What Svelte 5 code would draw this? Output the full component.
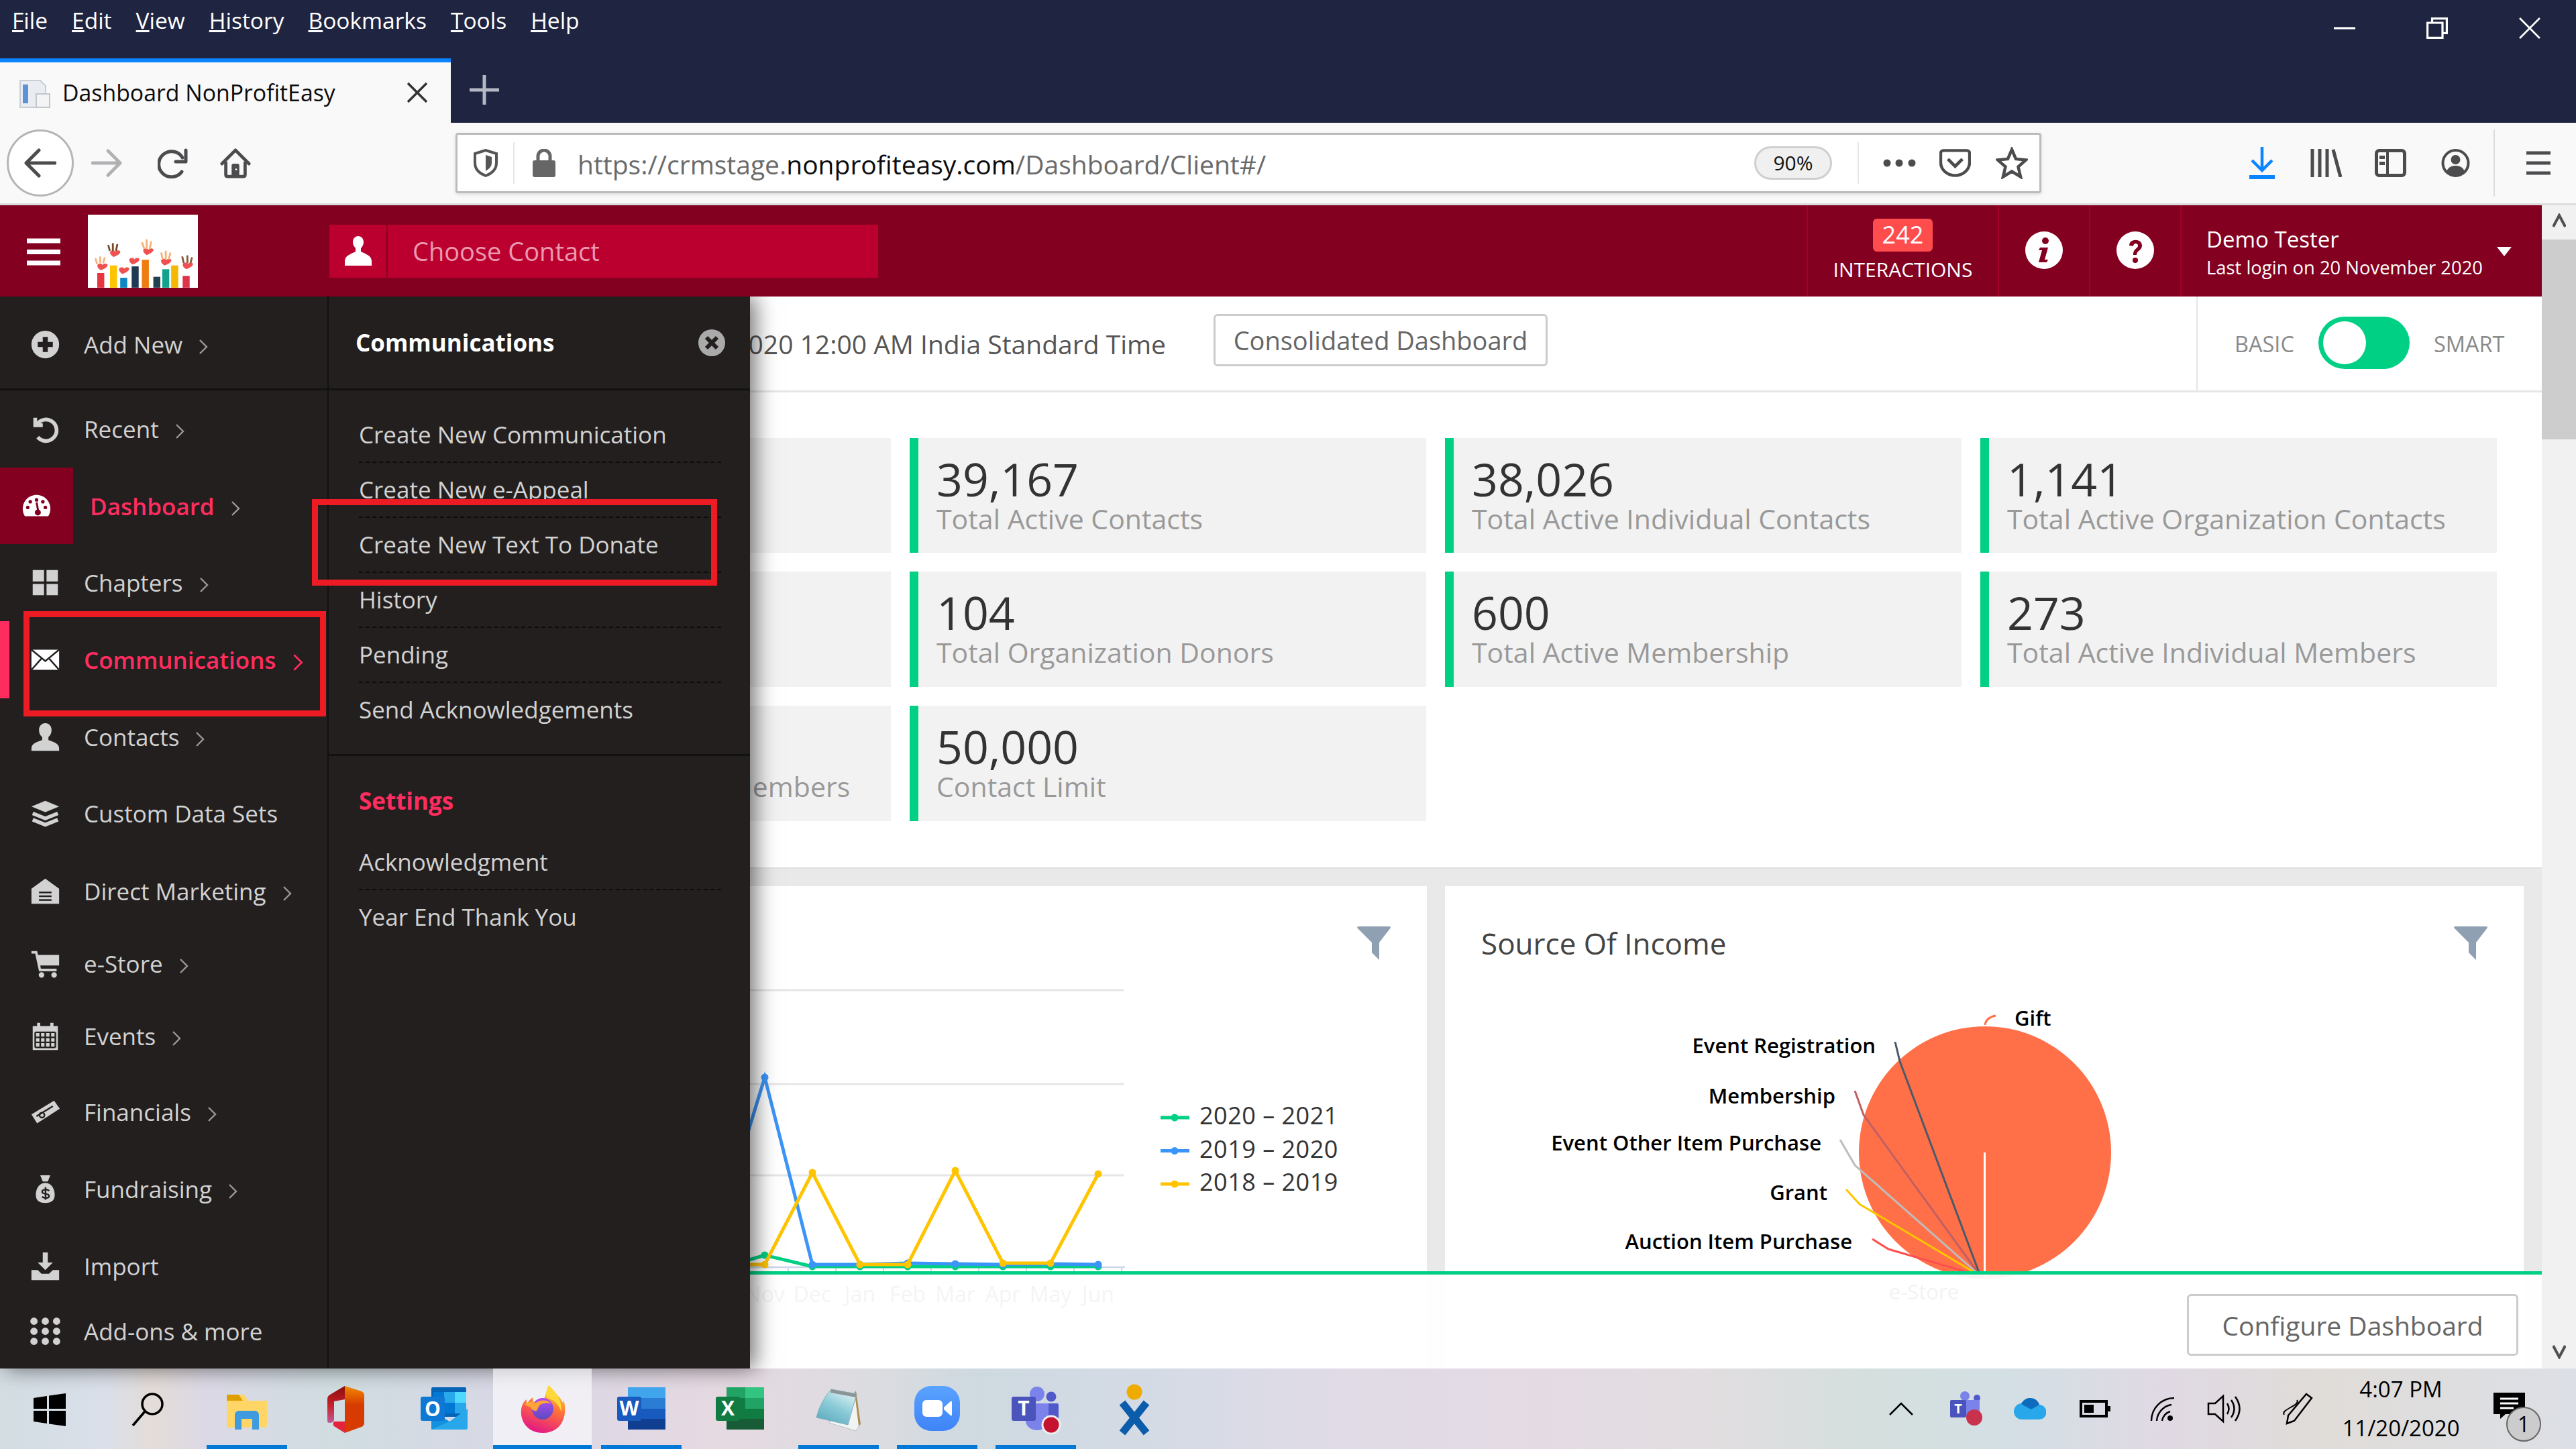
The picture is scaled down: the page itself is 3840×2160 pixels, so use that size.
<script>
  const menu = ['File', 'Edit', 'View', 'History', 'Bookmarks', 'Tools', 'Help'];

  // row heights vary a little in the real sidebar, so they live with the data
  const nav = [
    { label: 'Recent', icon: 'recent', h: 115, more: true },
    { label: 'Dashboard', icon: 'gauge', h: 114, more: true, kind: 'current' },
    { label: 'Chapters', icon: 'grid', h: 115, more: true },
    { label: 'Communications', icon: 'mail', h: 115, more: true, kind: 'open' },
    { label: 'Contacts', icon: 'user', h: 114, more: true },
    { label: 'Custom Data Sets', icon: 'stack', h: 115 },
    { label: 'Direct Marketing', icon: 'warehouse', h: 116, more: true },
    { label: 'e-Store', icon: 'cart', h: 100, more: true },
    { label: 'Events', icon: 'calendar', h: 116, more: true },
    { label: 'Financials', icon: 'money', h: 110, more: true },
    { label: 'Fundraising', icon: 'bag', h: 120, more: true },
    { label: 'Import', icon: 'import', h: 110 },
    { label: 'Add-ons & more', icon: 'dots', h: 84 }
  ];

  const dot = (x, y, r) => `M${x - r} ${y}a${r} ${r} 0 1 0 ${r * 2} 0a${r} ${r} 0 1 0 ${-r * 2} 0z`;
  const nine = [4, 12, 20].flatMap((y) => [3, 12, 21].map((x) => dot(x, y, 2.9))).join('');

  const fills = {
    plus: 'M12 1a11 11 0 1 0 0 22 11 11 0 0 0 0-22zM10 6h4v4h4v4h-4v4h-4v-4H6v-4h4z',
    gauge: 'M12 3C5.9 3 1 8 1 14c0 2.2.6 4.2 1.7 6h18.6c1.1-1.8 1.7-3.8 1.7-6 0-6-4.9-11-11-11z',
    grid: 'M2 2h9v9H2zM13 2h9v9h-9zM2 13h9v9H2zM13 13h9v9h-9z',
    mail: 'M1 4h22v16H1z',
    user: 'M12 1c-3 0-5 2.4-5 5.5 0 2.4 1 4.5 2.5 5.6v2.4c-3 1.2-8.500 2.300-8.500 6.500v2h22v-2c0-4.200-5.500-5.300-8.500-6.500v-2.400C16 11 17 8.900 17 6.500 17 3.400 15 1 12 1z',
    stack: 'M12 2l11 4.500L12 11 1 6.500z',
    warehouse: 'M12 2l11 8v12H1V10z',
    cart: 'M1 2h4.500l.7 3H23v8.500H8l.5 2.500H21v2H7L4 4H1z' + dot(9, 21, 2.2) + dot(19, 21, 2.2),
    calendar: 'M2 4h3.500V1.500h2.500V4h8V1.500h2.500V4H22v19H2z',
    money: 'M1 14L19 3l4.500 6.500L5.500 21z',
    bag: 'M8 1h8l-2 5h-4zM12 7c5 0 7.500 5 7.500 9.500S17 23 12 23s-7.500-2-7.500-6.500S7 7 12 7z',
    import: 'M10 1h4v8h4l-6 6-6-6h4zM1 15h5l3 3h6l3-3h5v8H1z',
    dots: nine
  };
  const lines = {
    recent: ['M4 3v6h6', 'M5 9a8.500 8.500 0 1 1 1 9.500'],
    stack: ['M2 12l10 4 10-4', 'M2 17l10 4 10-4']
  };
  const cuts = {
    mail: ['M1 4l11 9 11-9', 'M1 20l8-9', 'M23 20l-8-9'],
    warehouse: ['M7 13h10', 'M7 16h10', 'M7 19h10'],
    calendar: ['M4 9h16M4 13h16M4 17h16M4 21h16M4 9v12M8 9v12M12 9v12M16 9v12M20 9v12'],
    money: ['M5 15.500l13-8', 'M8 16a2 2 0 1 0-.1-.1'],
    bag: ['M15 13.500c-1-1.500-5.500-1.500-5.500.7s5.500 1 5.500 3.200-4.500 2-5.500.5', 'M12.200 10.500v10']
  };

  const subMenu = ['Create New Communication', 'Create New e-Appeal', 'Create New Text To Donate', 'History', 'Pending', 'Send Acknowledgements'];
  const settings = ['Acknowledgment', 'Year End Thank You'];

  const stats = [
    { hidden: true },
    { value: '39,167', label: 'Total Active Contacts' },
    { value: '38,026', label: 'Total Active Individual Contacts' },
    { value: '1,141', label: 'Total Active Organization Contacts' },
    { hidden: true },
    { value: '104', label: 'Total Organization Donors' },
    { value: '600', label: 'Total Active Membership' },
    { value: '273', label: 'Total Active Individual Members' },
    { value: '', label: 'Total Active Organization Members' },
    { value: '50,000', label: 'Contact Limit' }
  ];

  // chart data is in page pixels: the svg's viewBox starts where the panel starts
  const months = ['Nov', 'Dec', 'Jan', 'Feb', 'Mar', 'Apr', 'May', 'Jun'];
  const xs = [1140, 1211, 1282, 1353, 1424, 1495, 1566, 1637];
  const series = [
    { name: '2020 – 2021', color: '#00d084', lead: 1878, ys: [1869, 1886, 1886, 1886, 1886, 1886, 1886, 1886] },
    { name: '2019 – 2020', color: '#3b94f7', lead: 1702, ys: [1604, 1883, 1883, 1881, 1882, 1883, 1882, 1883] },
    { name: '2018 – 2019', color: '#ffc400', lead: 1883, ys: [1883, 1746, 1883, 1883, 1743, 1881, 1881, 1748] }
  ];
  const pts = (s) => `1110,${s.lead} ` + s.ys.map((y, i) => `${xs[i]},${y}`).join(' ');

  const slices = [
    { label: 'Event Registration', x: 2796, y: 1558, c: '#4a5a6a', from: [2825, 1551], via: [2832, 1580] },
    { label: 'Membership', x: 2736, y: 1633, c: '#c25f62', from: [2765, 1624], via: [2778, 1660] },
    { label: 'Event Other Item Purchase', x: 2715, y: 1703, c: '#bdbdbd', from: [2743, 1697], via: [2765, 1735] },
    { label: 'Grant', x: 2724, y: 1777, c: '#ffc400', from: [2752, 1771], via: [2772, 1793] },
    { label: 'Auction Item Purchase', x: 2761, y: 1850, c: '#ff5050', from: [2791, 1845], via: [2815, 1860] }
  ];

  const dock = [
    { id: 'win' }, { id: 'search' }, { id: 'folder', on: true }, { id: 'office' }, { id: 'outlook' },
    { id: 'firefox', on: true, active: true }, { id: 'word', on: true }, { id: 'excel' },
    { id: 'notepad', on: true }, { id: 'zoom', on: true }, { id: 'teams', on: true }, { id: 'xero' }
  ];
</script>

{#snippet ico(name)}
  <svg class="nav-ico" viewBox="0 0 24 24" aria-hidden="true">
    {#if fills[name]}<path d={fills[name]} fill="currentColor" fill-rule="evenodd" />{/if}
    {#each lines[name] ?? [] as d}<path {d} fill="none" stroke="currentColor" stroke-width="3" />{/each}
    {#each cuts[name] ?? [] as d}<path {d} fill="none" stroke="#231f1e" stroke-width="1.300" />{/each}
    {#if name === 'gauge'}
      <path d={dot(7, 8.500, 1.400) + dot(12, 7, 1.400) + dot(17, 8.500, 1.400) + dot(5, 13, 1.400) + dot(19, 13, 1.400) + dot(13, 17, 2.400)} fill="#830020" />
      <path d="M12 9l1.500 8" stroke="#830020" stroke-width="1.500" />
    {/if}
  </svg>
{/snippet}

{#snippet chevron()}
  <svg class="chev" viewBox="0 0 14 24" aria-hidden="true"><path d="M2 2l10 10L2 22" fill="none" stroke="currentColor" stroke-width="2.400" /></svg>
{/snippet}

{#snippet funnel()}
  <svg class="funnel" viewBox="0 0 50 50" aria-hidden="true"><path d="M0 2q0-2 2-2h46q2 0 2 2L33 24v26l-11-11V24z" fill="#8fa0b3" /></svg>
{/snippet}

<div class="page">
  <div class="titlebar">
    <div class="menurow">
      <nav class="menubar">
        {#each menu as m}<span><u>{m[0]}</u>{m.slice(1)}</span>{/each}
      </nav>
      <div class="winctl">
        <svg viewBox="0 0 30 30"><path d="M0 15h30" stroke="#fff" stroke-width="3" /></svg>
        <svg viewBox="0 0 30 30"><path d="M8 6V1.500h20.500V22H24M1.500 7.500h21v21h-21z" fill="none" stroke="#fff" stroke-width="3" /></svg>
        <svg viewBox="0 0 30 30"><path d="M1 1l28 28M29 1L1 29" stroke="#fff" stroke-width="2.500" /></svg>
      </div>
    </div>
    <div class="tabrow">
      <div class="tab">
        <svg class="favicon" viewBox="0 0 48 48">
          <path d="M2 6h30l8 8v32H2z" fill="#e9edf2" stroke="#c9ced6" stroke-width="2" />
          <rect x="6" y="12" width="8" height="28" fill="#5b93d6" />
          <rect x="26" y="26" width="20" height="20" fill="#f4f4f4" stroke="#c2c6cc" stroke-width="2" />
        </svg>
        <span class="tabtitle">Dashboard NonProfitEasy</span>
        <svg class="tabclose" viewBox="0 0 30 30"><path d="M1 1l28 28M29 1L1 29" stroke="#333" stroke-width="3.500" /></svg>
      </div>
      <svg class="newtab" viewBox="0 0 44 44"><path d="M22 0v44M0 22h44" stroke="#b4b8c4" stroke-width="5" /></svg>
    </div>
  </div>

  <div class="toolbar">
    <div class="backbtn">
      <svg viewBox="0 0 48 46" width="48" height="46"><path d="M46 23H4M22 4L3 23l19 19" fill="none" stroke="#4c4c4f" stroke-width="5" stroke-linecap="round" stroke-linejoin="round" /></svg>
    </div>
    <svg class="tb fwd" viewBox="0 0 48 46"><path d="M2 23h42M26 4l19 19-19 19" fill="none" stroke="#b1b1b3" stroke-width="5" stroke-linecap="round" stroke-linejoin="round" /></svg>
    <svg class="tb reload" viewBox="0 0 46 46"><path d="M37 15A19 19 0 1 0 36 36" fill="none" stroke="#4c4c4f" stroke-width="5" stroke-linecap="round" /><path d="M42 4v17H27" fill="none" stroke="#4c4c4f" stroke-width="5" stroke-linecap="round" stroke-linejoin="round" /></svg>
    <svg class="tb home" viewBox="0 0 48 48"><path d="M3 25L24 4l21 21" fill="none" stroke="#4c4c4f" stroke-width="5" stroke-linecap="round" stroke-linejoin="round" /><path d="M9 22v20q0 3 3 3h24q3 0 3-3V22" fill="none" stroke="#4c4c4f" stroke-width="5" /><path d="M18 45V28q0-3 3-3h6q3 0 3 3v17z" fill="#4c4c4f" /><circle cx="25" cy="34" r="1.500" fill="#f9f9fa" /></svg>

    <div class="urlbar">
      <svg class="shield" viewBox="0 0 36 42"><path d="M18 2L2 7v14c0 10 8 16 16 19 8-3 16-9 16-19V7z" fill="none" stroke="#555" stroke-width="4" /><path d="M18 9v24c5-3 9-7 9-12V12z" fill="#555" /></svg>
      <i class="urldiv"></i>
      <svg class="lock" viewBox="0 0 36 42"><path d="M9 18v-7a9 9 0 0 1 18 0v7" fill="none" stroke="#666" stroke-width="5" /><rect x="1" y="17" width="34" height="25" rx="3" fill="#666" /></svg>
      <span class="url">https://crmstage.<b>nonprofiteasy.com</b>/Dashboard/Client#/</span>
      <span class="zoompill">90%</span>
      <i class="urldiv second"></i>
      <svg class="dots3" viewBox="0 0 49 12"><circle cx="6" cy="6" r="5.500" fill="#4c4c4f" /><circle cx="24" cy="6" r="5.500" fill="#4c4c4f" /><circle cx="43" cy="6" r="5.500" fill="#4c4c4f" /></svg>
      <svg class="pocket" viewBox="0 0 48 42"><path d="M2 6a4 4 0 0 1 4-4h36a4 4 0 0 1 4 4v14a22 20 0 0 1-44 0z" fill="none" stroke="#4c4c4f" stroke-width="4.500" /><path d="M13 15l11 11 11-11" fill="none" stroke="#4c4c4f" stroke-width="5" /></svg>
      <svg class="star" viewBox="0 0 48 48"><path d="M24 4l6 14 15 1.500-11.500 10 3.500 15L24 36.500 11 44.500l3.500-15L3 19.500 18 18z" fill="none" stroke="#4c4c4f" stroke-width="4.500" /></svg>
    </div>

    <div class="tools">
      <svg class="dl" viewBox="0 0 38 48"><path d="M19 0v34M4 20l15 15 15-15" fill="none" stroke="#0a84ff" stroke-width="4.500" /><rect x="0" y="42" width="38" height="6" fill="#0a84ff" /></svg>
      <svg class="lib" viewBox="0 0 48 42"><path d="M3 0v42M14 0v42M25 0v42M34 1l11 41" fill="none" stroke="#4c4c4f" stroke-width="5" /></svg>
      <svg class="side" viewBox="0 0 47 42"><rect x="2.500" y="2.500" width="42" height="37" rx="4" fill="none" stroke="#4c4c4f" stroke-width="5" /><path d="M19 2v38" stroke="#4c4c4f" stroke-width="4" /><path d="M7 10h8v5H7zM7 19h8v5H7z" fill="#4c4c4f" /></svg>
      <svg class="acct" viewBox="0 0 43 42"><circle cx="21.500" cy="21" r="19" fill="none" stroke="#4c4c4f" stroke-width="4" /><circle cx="21.500" cy="16" r="7" fill="#4c4c4f" /><path d="M8 34c2-7 8-9 13.500-9S33 27 35 34a19 19 0 0 1-27 0z" fill="#4c4c4f" /></svg>
      <i class="tooldiv"></i>
      <svg class="burger" viewBox="0 0 36 36"><path d="M0 3h36M0 18h36M0 33h36" stroke="#4c4c4f" stroke-width="5" /></svg>
    </div>
  </div>

  <div class="app">
    <div class="appcol">
      <header class="apphead">
        <svg class="hamb" viewBox="0 0 50 41"><path d="M0 4h50M0 20.500h50M0 37h50" stroke="#fff" stroke-width="7" /></svg>
        <svg class="logo" viewBox="0 0 164 109">
          <rect width="164" height="109" fill="#fff" />
          <g transform="translate(4 32) scale(.95 .705)">
            <g stroke-width="11">
              <path d="M16 109V78" stroke="#e8343f" />
              <path d="M36 109V62" stroke="#ffc400" />
              <path d="M52 109V88" stroke="#0f87c4" />
              <path d="M70 109V64" stroke="#1f3a52" />
              <path d="M86 109V50" stroke="#ef7c10" />
              <path d="M104 109V86" stroke="#23404f" />
              <path d="M118 109V70" stroke="#12a38c" />
              <path d="M132 109V62" stroke="#f5b800" />
              <path d="M150 109V84" stroke="#e0334c" />
            </g>
            <g fill="#f05050">
              <path d="M16 72c-8-7-6-14-1-14 3 0 4 3 4 3s1-3 4-3c5 0 7 7-7 14z" />
              <path d="M50 80c-8-7-6-14-1-14 3 0 4 3 4 3s1-3 4-3c5 0 7 7-7 14z" />
              <path d="M36 44c-8-7-6-14-1-14 3 0 4 3 4 3s1-3 4-3c5 0 7 7-7 14z" />
              <path d="M66 60c-8-7-6-14-1-14 3 0 4 3 4 3s1-3 4-3c5 0 7 7-7 14z" />
              <path d="M88 40c-8-7-6-14-1-14 3 0 4 3 4 3s1-3 4-3c5 0 7 7-7 14z" />
              <path d="M116 62c-8-7-6-14-1-14 3 0 4 3 4 3s1-3 4-3c5 0 7 7-7 14z" />
              <path d="M150 70c-8-7-6-14-1-14 3 0 4 3 4 3s1-3 4-3c5 0 7 7-7 14z" />
            </g>
            <g stroke-width="3" stroke-linecap="round">
              <path d="M30 30l-2-10M35 30V16M40 30l2-12" stroke="#7a4a2a" />
              <path d="M84 26l-3-12M88 26V8M93 26l2-14" stroke="#f6b27a" />
              <path d="M10 58l-2-10M15 56V44M20 56l2-10" stroke="#f6b27a" />
              <path d="M113 48l-2-12M118 48V32M123 48l2-12" stroke="#f6b27a" />
              <path d="M146 56l-2-12M152 56V42M157 56l2-10" stroke="#8a5a3a" />
            </g>
          </g>
        </svg>
        <div class="contact">
          <span class="contact-ico">
            <svg viewBox="0 0 50 44" width="50" height="44"><path d="M25 0c-5 0-8 4-8 9 0 4 2 7 4 9v5c-6 3-16 6-16 14v7h40v-7c0-8-10-11-16-14v-5c2-2 4-5 4-9 0-5-3-9-8-9z" fill="#fff" /></svg>
          </span>
          <span class="contact-txt">Choose Contact</span>
        </div>
        <div class="headright">
          <div class="hcell interactions">
            <span class="badge">242</span>
            <span class="ilabel">INTERACTIONS</span>
          </div>
          <div class="hcell round">
            <span class="hcircle"><svg viewBox="0 0 56 56"><circle cx="28" cy="28" r="28" fill="#fff" /><circle cx="30" cy="14" r="5" fill="#830020" /><path d="M22 24h12l-5 18h5l-2 4H20l5-18h-5z" fill="#830020" /></svg></span>
          </div>
          <div class="hcell round">
            <span class="hcircle"><svg viewBox="0 0 56 56"><circle cx="28" cy="28" r="28" fill="#fff" /><path d="M19 21c0-11 19-11 19 0 0 8-8 7-8 14h-5c0-10 7-9 7-14 0-4-7-4-7 1z" fill="#830020" /><circle cx="28" cy="43" r="4" fill="#830020" /></svg></span>
          </div>
          <div class="user">
            <div class="uname">Demo Tester</div>
            <div class="ulogin">Last login on 20 November 2020</div>
            <svg class="caret" viewBox="0 0 22 14"><path d="M0 0h22L11 14z" fill="#fff" /></svg>
          </div>
        </div>
      </header>

      <main class="content">
        <div class="topline">
          <span class="stamp">Data as of 11/20/2020 12:00 AM India Standard Time</span>
          <button class="ghost consolidated">Consolidated Dashboard</button>
          <div class="mode">
            <span>BASIC</span>
            <span class="toggle"><i></i></span>
            <span>SMART</span>
          </div>
        </div>

        <div class="stats">
          {#each stats as s}
            <div class="stat">
              {#if !s.hidden}
                <div class="num">{s.value}</div>
                <div class="lbl">{s.label}</div>
              {/if}
            </div>
          {/each}
        </div>

        <div class="panels">
          <section class="panel chartpanel">
            <div class="phead end">{@render funnel()}</div>
            <svg class="canvas" viewBox="558 1319 1569 721" width="1569" height="721">
              {#each [1474, 1614, 1750] as y}<line x1="1118" x2="1675" y1={y} y2={y} stroke="#e6e6e6" stroke-width="3" />{/each}
              <line x1="1118" x2="1677" y1="1887" y2="1887" stroke="#ccd6eb" stroke-width="2.500" />
              {#each xs as x}<line x1={x + 35} x2={x + 35} y1="1887" y2="1910" stroke="#ccd6eb" stroke-width="2" />{/each}
              {#each months as m, i}<text x={xs[i]} y="1939" text-anchor="middle" class="tick">{m}</text>{/each}
              {#each series as s}
                <polyline points={pts(s)} fill="none" stroke={s.color} stroke-width="5" />
                {#each s.ys as y, i}<circle cx={xs[i]} cy={y} r="5.500" fill={s.color} />{/each}
              {/each}
              {#each series as s, i}
                <line x1="1730" x2="1773" y1={1664 + i * 49.500} y2={1664 + i * 49.500} stroke={s.color} stroke-width="5" />
                <circle cx="1751" cy={1664 + i * 49.500} r="5.500" fill={s.color} />
                <text x="1788" y={1674 + i * 49.500} class="legend">{s.name}</text>
              {/each}
            </svg>
          </section>

          <section class="panel">
            <div class="phead">
              <h2>Source Of Income</h2>
              {@render funnel()}
            </div>
            <svg class="canvas" viewBox="2154 1319 1608 721" width="1608" height="721">
              <circle cx="2959" cy="1716" r="188" fill="#ff7049" />
              <line x1="2958.500" x2="2958.500" y1="1716" y2="1900" stroke="#fff" stroke-width="3" />
              <path d="M2959 1526q1-11 16-14" fill="none" stroke="#ff7049" stroke-width="3" />
              <text x="3003" y="1527" class="plabel">Gift</text>
              {#each slices as s}
                <polyline points="{s.from[0]},{s.from[1]} {s.via[0]},{s.via[1]} 2952,1900" fill="none" stroke={s.c} stroke-width="3" />
                <text x={s.x} y={s.y + 10} text-anchor="end" class="plabel">{s.label}</text>
              {/each}
              <text x="2920" y="1935" text-anchor="end" class="plabel faint">e-Store</text>
            </svg>
          </section>
        </div>
      </main>

      <div class="pagefoot">
        <button class="ghost configure">Configure Dashboard</button>
      </div>

      <aside class="drawer">
        <div class="col-main">
          <div class="addnew">
            {@render ico('plus')}
            <span>Add New</span>
            {@render chevron()}
          </div>
          {#each nav as n}
            <div class="navrow {n.kind ?? ''}" style:height="{n.h}px">
              {#if n.kind === 'current'}
                <span class="curblock">{@render ico(n.icon)}</span>
              {:else}
                {@render ico(n.icon)}
              {/if}
              <span class="navtxt">{n.label}</span>
              {#if n.more}{@render chevron()}{/if}
            </div>
          {/each}
        </div>
        <div class="col-sub">
          <div class="subhead">
            <span>Communications</span>
            <svg class="subclose" viewBox="0 0 40 40"><circle cx="20" cy="20" r="20" fill="#aaa" /><path d="M12 12l16 16M28 12L12 28" stroke="#231f1e" stroke-width="6" /></svg>
          </div>
          <ul class="sublist">
            {#each subMenu as s}<li>{s}</li>{/each}
          </ul>
          <div class="settings">
            <div class="settitle">Settings</div>
            <ul class="sublist tight">
              {#each settings as s}<li>{s}</li>{/each}
            </ul>
          </div>
        </div>
        <i class="mark mark-nav"></i>
        <i class="mark mark-sub"></i>
      </aside>
    </div>

    <div class="scrollbar">
      <svg viewBox="0 0 20 22" width="20" height="22"><path d="M1 20L10 3l9 17" fill="none" stroke="#505050" stroke-width="4" /></svg>
      <i class="thumb"></i>
      <svg class="sdown" viewBox="0 0 20 22" width="20" height="22"><path d="M1 2l9 17 9-17" fill="none" stroke="#505050" stroke-width="4" /></svg>
    </div>
  </div>

  <footer class="taskbar">
    <div class="dock">
      {#each dock as d}
        <div class="slot" class:active={d.active} class:on={d.on}>
          <svg viewBox="0 0 72 72" width="72" height="72">
            {#if d.id === 'win'}
              <path d="M12 19l20-3v19H12zM35 15.500L60 12v23H35zM12 38h20v19l-20-3zM35 38h25v23l-25-3.500z" fill="#000" />
            {:else if d.id === 'search'}
              <circle cx="42" cy="28" r="15" fill="none" stroke="#000" stroke-width="3.500" /><path d="M31 39L13 60" stroke="#000" stroke-width="3.500" />
            {:else if d.id === 'folder'}
              <path d="M6 14h26l6 9h28v36a4 4 0 0 1-4 4H10a4 4 0 0 1-4-4z" fill="#ffd566" /><path d="M6 14h18l6 9H6z" fill="#e09f00" /><path d="M18 66V44a6 6 0 0 1 6-6h24a6 6 0 0 1 6 6v22h-10V50H28v16z" fill="#3f9be0" />
            {:else if d.id === 'office'}
              <defs>
                <linearGradient id="off-r" x1="0" y1="0" x2="0" y2="1"><stop offset="0" stop-color="#f08a00" /><stop offset=".4" stop-color="#d83b01" /></linearGradient>
                <linearGradient id="off-l" x1="0" y1="0" x2="0" y2="1"><stop offset="0" stop-color="#8a0c0c" /><stop offset=".55" stop-color="#c8242c" /><stop offset="1" stop-color="#c05a9c" /></linearGradient>
              </defs>
              <path d="M35 1L60 9q4 2 4 6v41q0 4-4 6L35 71z" fill="url(#off-r)" />
              <path d="M35 1L13 14q-4 2-4 7v32q0 3 3 3 6 0 7-4V24l16-3z" fill="url(#off-l)" />
              <path d="M19 54h16v17l-16-10q-3-3 0-7z" fill="#e3243a" />
            {:else if d.id === 'outlook'}
              <rect x="17" y="3" width="52" height="44" rx="2" fill="#0364b8" />
              <rect x="20" y="10" width="16" height="16" fill="#0078d4" /><rect x="36" y="10" width="16" height="16" fill="#28a8ea" /><rect x="52" y="10" width="17" height="16" fill="#50d9ff" />
              <rect x="20" y="26" width="16" height="16" fill="#0364b8" /><rect x="36" y="26" width="16" height="16" fill="#0078d4" /><rect x="52" y="26" width="17" height="16" fill="#28a8ea" />
              <path d="M17 38l27 16 27-19v29q0 2-2 2H19q-2 0-2-2z" fill="#28a8ea" />
              <path d="M17 38l27 16-27 12z" fill="#1490df" />
              <rect x="1" y="17" width="36" height="36" rx="3" fill="#0f78d4" /><text x="19" y="46" text-anchor="middle" class="tile">O</text>
            {:else if d.id === 'firefox'}
              <defs>
                <linearGradient id="ff-a" x1=".7" y1="0" x2=".35" y2="1"><stop offset="0" stop-color="#ffe226" /><stop offset=".45" stop-color="#ff7139" /><stop offset="1" stop-color="#e31587" /></linearGradient>
                <linearGradient id="ff-b" x1=".5" y1="0" x2=".5" y2="1"><stop offset="0" stop-color="#b44cf5" /><stop offset="1" stop-color="#5a4bc0" /></linearGradient>
              </defs>
              <path d="M45 0c1 8 15 12 21 26 1-2 1-4 1-4 6 16 2 49-31 49C14 71 2 54 4 36c1-7 4-12 8-15-.5 3 0 5 1 7 2-5 5-8 9-10-1 3-1 5 0 7 5-1 11 0 14 2z" fill="url(#ff-a)" />
              <path d="M45 0c8 7 20 20 19 40-4-12-12-19-22-21-2-8 0-14 3-19z" fill="#ffd83a" />
              <circle cx="36" cy="35" r="16" fill="url(#ff-b)" />
              <path d="M8 28q10-6 18-2 6-5 16-3l7 4q-12-2-18 3l-4 8q-6 1-9-5-6-2-10-5z" fill="#ffa436" />
            {:else if d.id === 'word'}
              <rect x="16" y="3" width="56" height="63" rx="2" fill="#185abd" /><rect x="16" y="3" width="56" height="16" fill="#41a5ee" /><rect x="16" y="19" width="56" height="16" fill="#2b7cd3" /><rect x="16" y="50" width="56" height="16" fill="#103f91" /><rect x="0" y="17" width="36" height="36" rx="3" fill="#185abd" /><text x="18" y="45" text-anchor="middle" class="tile">W</text>
            {:else if d.id === 'excel'}
              <rect x="16" y="3" width="56" height="63" rx="2" fill="#107c41" /><rect x="44" y="3" width="28" height="16" fill="#33c481" /><rect x="16" y="3" width="28" height="16" fill="#21a366" /><rect x="44" y="19" width="28" height="16" fill="#21a366" /><rect x="16" y="50" width="56" height="16" fill="#185c37" /><rect x="0" y="17" width="36" height="36" rx="3" fill="#107c41" /><text x="18" y="45" text-anchor="middle" class="tile">X</text>
            {:else if d.id === 'notepad'}
              <defs><linearGradient id="np" x1=".8" y1="0" x2=".2" y2="1"><stop offset="0" stop-color="#e4f4f6" /><stop offset=".5" stop-color="#8ccbd8" /><stop offset="1" stop-color="#5aa9bd" /></linearGradient></defs>
              <path d="M60 10l8 48-6 10-40-12z" fill="#f2f4f4" stroke="#b8c2c6" stroke-width="1" />
              <path d="M62 8l7 50-3 3-6-50z" fill="#ab8f54" />
              <path d="M25 6l38 7-13 46L3 48q5-22 22-42z" fill="url(#np)" stroke="#7fb2bf" stroke-width="1" />
              <path d="M25 6l38 7-1 5-38-7z" fill="#8c9498" />
            {:else if d.id === 'zoom'}
              <defs><linearGradient id="zm" x1="0" y1="0" x2="0" y2="1"><stop offset="0" stop-color="#5aa2ff" /><stop offset="1" stop-color="#3f84f8" /></linearGradient></defs>
              <rect x="2" y="1" width="68" height="67" rx="25" fill="url(#zm)" /><rect x="14" y="22" width="30" height="25" rx="6" fill="#fff" /><path d="M46 33l10-9q2-1 2 1v19q0 2-2 1l-10-9z" fill="#fff" />
            {:else if d.id === 'teams'}
              <circle cx="38" cy="13" r="11" fill="#7b83eb" /><circle cx="59" cy="17" r="7.500" fill="#5059c9" />
              <rect x="45" y="27" width="25" height="29" rx="2" fill="#5059c9" />
              <path d="M21 27h34v26a17 14 0 0 1-34 0z" fill="#7b83eb" />
              <rect x="0" y="17" width="36" height="36" rx="3" fill="#4b53bc" /><text x="18" y="45" text-anchor="middle" class="tile">T</text>
              <circle cx="59" cy="59" r="13" fill="#c4122f" stroke="#eee" stroke-width="3" />
            {:else if d.id === 'xero'}
              <circle cx="36" cy="10" r="11.500" fill="#f0ab00" /><path d="M18 26l36 45M54 26L18 71" stroke="#0b5cab" stroke-width="11" />
            {/if}
          </svg>
        </div>
      {/each}
    </div>
    <div class="tray">
      <svg class="t-chev" viewBox="0 0 36 20"><path d="M1 19L18 2l17 17" fill="none" stroke="#000" stroke-width="2.500" /></svg>
      <svg class="t-teams" viewBox="0 0 50 54"><circle cx="24" cy="8" r="7" fill="#7b83eb" /><circle cx="42" cy="11" r="5" fill="#5059c9" /><rect x="16" y="14" width="30" height="24" fill="#7b83eb" /><rect x="2" y="14" width="24" height="26" rx="2" fill="#4b53bc" /><text x="14" y="34" text-anchor="middle" class="tile small">T</text><circle cx="38" cy="40" r="12" fill="#c9324c" /></svg>
      <svg class="t-drive" viewBox="0 0 48 32"><path d="M13 32a12 12 0 0 1-2-24C14 3 19 0 24 0c7 0 12 4 14 10a11 11 0 0 1-1 22z" fill="#28a8ea" /><path d="M11 9C14 3 19 0 24 0c7 0 12 4 14 10l-12 7z" fill="#0f6cbd" /></svg>
      <svg class="t-batt" viewBox="0 0 46 26"><rect x="2" y="2" width="38" height="22" fill="none" stroke="#000" stroke-width="4" /><rect x="7" y="7" width="14" height="12" fill="#000" /><rect x="41" y="9" width="5" height="8" fill="#000" /></svg>
      <svg class="t-wifi" viewBox="0 0 36 36"><g fill="none" stroke="#000" stroke-width="2.400"><path d="M2 36A34 34 0 0 1 36 2" /><path d="M10 36a26 26 0 0 1 22-24" /><path d="M18 36a18 18 0 0 1 12-14" /></g><circle cx="30" cy="32" r="4" /></svg>
      <svg class="t-vol" viewBox="0 0 50 44"><path d="M2 14h10L24 3v38L12 30H2z" fill="none" stroke="#000" stroke-width="2.500" /><path d="M30 14q5 8 0 16M36 9q9 13 0 26M42 4q13 18 0 36" fill="none" stroke="#000" stroke-width="2.500" /></svg>
      <svg class="t-pen" viewBox="0 0 50 50"><path d="M38 3l8 6-26 34-11 4 2-12z" fill="none" stroke="#000" stroke-width="2.500" /><path d="M5 34C-1 26 30 20 24 12" fill="none" stroke="#000" stroke-width="2" /></svg>
      <div class="clock">
        <span>4:07 PM</span>
        <span>11/20/2020</span>
      </div>
      <div class="notif">
        <svg viewBox="0 0 47 39" width="47" height="39"><path d="M0 0h47v32H18l-8 7v-7H0z" fill="#000" /><path d="M10 9h27M10 16h27M10 23h20" stroke="#fff" stroke-width="3" /></svg>
        <span class="ncount">1</span>
      </div>
    </div>
  </footer>
</div>

<style>
  :global(body) {
    margin: 0;
  }

  .page {
    width: 3840px;
    height: 2160px;
    display: flex;
    flex-direction: column;
    overflow: hidden;
    font-family: 'Open Sans', 'Noto Sans', sans-serif;
    background: #fff;
  }

  .titlebar {
    height: 183px;
    flex: none;
    background: #1f2440;
    display: flex;
    flex-direction: column;
  }

  .menurow {
    height: 84px;
    display: flex;
    justify-content: space-between;
  }

  .menubar {
    display: flex;
    gap: 36px;
    padding: 7px 0 0 18px;
    color: #fff;
    font-size: 33.500px;
    line-height: 46px;
  }

  .winctl {
    display: flex;
    gap: 106px;
    padding: 26px 53px 0 0;
  }

  .winctl svg {
    width: 32px;
    height: 32px;
  }

  .tabrow {
    height: 99px;
    display: flex;
    align-items: flex-start;
  }

  .tab {
    width: 672px;
    height: 96px;
    margin-top: 3px;
    box-sizing: border-box;
    background: #f9f9fa;
    border-top: 6px solid #0a84ff;
    display: flex;
    align-items: center;
    padding-left: 28px;
  }

  .favicon {
    width: 48px;
    height: 48px;
    flex: none;
  }

  .tabtitle {
    margin-left: 17px;
    font-size: 33.800px;
    color: #0c0c0d;
    width: 514px;
  }

  .tabclose {
    width: 30px;
    height: 40px;
    flex: none;
  }

  .newtab {
    width: 44px;
    height: 44px;
    margin: 28px 0 0 28px;
  }

  .toolbar {
    height: 120px;
    flex: none;
    box-sizing: content-box;
    background: #f9f9fa;
    border-bottom: 3px solid #dcdcdc;
    display: flex;
    align-items: center;
    position: relative;
  }

  .backbtn {
    width: 100px;
    height: 100px;
    margin-left: 10px;
    box-sizing: border-box;
    border: 3px solid #b5b5b5;
    border-radius: 50%;
    background: #fff;
    display: flex;
    align-items: center;
    justify-content: center;
    flex: none;
  }

  .tb {
    width: 46px;
    height: 46px;
    flex: none;
  }

  .fwd {
    margin-left: 26px;
  }

  .reload {
    margin-left: 53px;
  }

  .home {
    margin-left: 47px;
  }

  .urlbar {
    width: 2364px;
    height: 90px;
    margin-left: 305px;
    box-sizing: border-box;
    background: #fff;
    border: 3px solid #bcbcbc;
    border-radius: 4px;
    box-shadow: 0 2px 5px rgba(0, 0, 0, 0.12);
    display: flex;
    align-items: center;
    flex: none;
  }

  .shield {
    width: 36px;
    height: 42px;
    margin-left: 24px;
    flex: none;
  }

  .urldiv {
    width: 2px;
    height: 62px;
    background: #e6e6e6;
    margin-left: 23px;
    flex: none;
  }

  .lock {
    width: 36px;
    height: 42px;
    margin-left: 26px;
    flex: none;
  }

  .url {
    margin-left: 32px;
    margin-top: 3px;
    width: 1754px;
    font-size: 39px;
    color: #6a6a6a;
    white-space: nowrap;
  }

  .url b {
    color: #0c0c0d;
    font-weight: 400;
  }

  .zoompill {
    width: 116px;
    height: 50px;
    box-sizing: border-box;
    border: 3px solid #cfcfcf;
    border-radius: 25px;
    background: #f0f0f0;
    font-size: 30px;
    line-height: 44px;
    text-align: center;
    color: #111;
    flex: none;
  }

  .urldiv.second {
    margin-left: 38px;
  }

  .dots3 {
    width: 49px;
    height: 12px;
    margin-left: 36px;
    flex: none;
  }

  .pocket {
    width: 47px;
    height: 42px;
    margin-left: 35px;
    flex: none;
  }

  .star {
    width: 48px;
    height: 48px;
    margin-left: 37px;
    flex: none;
  }

  .tools {
    display: flex;
    align-items: center;
    margin-left: 310px;
  }

  .dl {
    width: 38px;
    height: 48px;
  }

  .lib {
    width: 48px;
    height: 42px;
    margin-left: 53px;
  }

  .side {
    width: 47px;
    height: 42px;
    margin-left: 48px;
  }

  .acct {
    width: 43px;
    height: 42px;
    margin-left: 52px;
  }

  .tooldiv {
    width: 2px;
    height: 100px;
    background: #dcdcdc;
    margin-left: 35px;
  }

  .burger {
    width: 36px;
    height: 36px;
    margin-left: 47px;
  }

  .app {
    flex: 1;
    min-height: 0;
    display: flex;
  }

  .appcol {
    flex: 1;
    min-width: 0;
    display: flex;
    flex-direction: column;
    position: relative;
  }

  .scrollbar {
    width: 51px;
    flex: none;
    background: #f1f1f1;
    display: flex;
    flex-direction: column;
    align-items: center;
    padding-top: 12px;
    box-sizing: border-box;
  }

  .thumb {
    align-self: stretch;
    height: 298px;
    margin-top: 17px;
    background: #cdcdcd;
  }

  .sdown {
    margin-top: auto;
    margin-bottom: 14px;
  }

  .apphead {
    height: 136px;
    flex: none;
    background: #830020;
    display: flex;
    align-items: center;
    position: relative;
    z-index: 3;
  }

  .hamb {
    width: 50px;
    height: 41px;
    margin: 3px 0 0 40px;
    flex: none;
  }

  .logo {
    width: 164px;
    height: 109px;
    margin-left: 41px;
    flex: none;
  }

  .contact {
    width: 818px;
    height: 79px;
    margin-left: 196px;
    background: #bb0030;
    display: flex;
    flex: none;
  }

  .contact-ico {
    width: 85px;
    border-right: 2px solid #830020;
    display: flex;
    align-items: center;
    justify-content: center;
    flex: none;
  }

  .contact-txt {
    margin-left: 37px;
    font-size: 38px;
    line-height: 79px;
    color: #ea9aae;
  }

  .headright {
    margin-left: auto;
    display: flex;
    align-self: stretch;
  }

  .hcell {
    border-left: 2px solid #a30028;
    box-sizing: border-box;
  }

  .interactions {
    width: 285px;
    display: flex;
    flex-direction: column;
    align-items: center;
    padding-top: 20px;
  }

  .badge {
    width: 89px;
    height: 49px;
    border-radius: 6px;
    background: #ff4d4d;
    color: #fff;
    font-size: 36px;
    line-height: 48px;
    text-align: center;
  }

  .ilabel {
    margin-top: 6px;
    font-size: 30px;
    line-height: 42px;
    color: #fff;
  }

  .round {
    width: 136px;
    display: flex;
    align-items: center;
    justify-content: center;
  }

  .hcircle {
    width: 56px;
    height: 56px;
    margin-top: -3px;
  }

  .user {
    width: 539px;
    box-sizing: border-box;
    border-left: 2px solid #a30028;
    padding: 31px 0 0 37px;
    color: #fff;
    position: relative;
  }

  .uname {
    font-size: 33px;
    line-height: 40px;
  }

  .ulogin {
    margin-top: 3px;
    font-size: 27.400px;
    line-height: 38px;
  }

  .caret {
    width: 22px;
    height: 14px;
    position: absolute;
    top: 62px;
    left: 470px;
  }

  .content {
    flex: 1;
    min-height: 0;
    display: flex;
    flex-direction: column;
  }

  .topline {
    height: 140px;
    flex: none;
    border-bottom: 3px solid #e6e6e6;
    display: flex;
    align-items: center;
  }

  .stamp {
    width: 1738px;
    flex: none;
    text-align: right;
    white-space: nowrap;
    font-size: 39px;
    color: #555;
  }

  .ghost {
    font-family: inherit;
    color: #666;
    background: #fff;
    border: 3px solid #ccc;
    border-radius: 6px;
    font-size: 38px;
    padding: 0;
  }

  .consolidated {
    width: 498px;
    height: 78px;
    margin: -11px 0 0 71px;
  }

  .mode {
    margin-left: auto;
    width: 515px;
    height: 100%;
    box-sizing: border-box;
    border-left: 2px solid #e6e6e6;
    display: flex;
    align-items: center;
    padding-left: 55px;
    font-size: 32.500px;
    color: #8a8a8a;
    gap: 36px;
  }

  .toggle {
    width: 136px;
    height: 78px;
    border-radius: 39px;
    background: #00d084;
    display: flex;
    align-items: center;
    padding-left: 7px;
    box-sizing: border-box;
    margin-top: -2px;
  }

  .toggle i {
    width: 64px;
    height: 64px;
    border-radius: 50%;
    background: #fff;
  }

  .stats {
    flex: none;
    display: grid;
    grid-template-columns: repeat(4, 770px);
    grid-template-rows: 171px 172px 172px;
    column-gap: 28px;
    row-gap: 28px;
    padding: 68px 0 69px 558px;
  }

  .stat {
    background: #f2f2f2;
    border-left: 13px solid #00d084;
    padding: 25px 0 0 27px;
  }

  .num {
    font-size: 68px;
    line-height: 72px;
    height: 72px;
    color: #333;
  }

  .lbl {
    font-size: 41px;
    line-height: 47px;
    color: #999;
    white-space: nowrap;
  }

  .panels {
    flex: 1;
    min-height: 0;
    background: #e9e9e9;
    border-top: 2px solid #e0e0e0;
    display: flex;
    gap: 27px;
    padding: 26px 27px 0 558px;
  }

  .panel {
    flex: 1;
    background: #fff;
    position: relative;
  }

  .chartpanel {
    flex: none;
    width: 1569px;
  }

  .phead {
    height: 170px;
    box-sizing: border-box;
    padding: 0 54px;
    display: flex;
    align-items: center;
    justify-content: space-between;
    position: relative;
    z-index: 1;
  }

  .phead.end {
    justify-content: flex-end;
  }

  .phead h2 {
    margin: 0;
    font-size: 44px;
    font-weight: 400;
    color: #444;
  }

  .funnel {
    width: 50px;
    height: 50px;
  }

  .canvas {
    position: absolute;
    left: 0;
    top: 0;
  }

  .tick {
    font-size: 32px;
    fill: #666;
  }

  .legend {
    font-size: 36px;
    fill: #333;
    letter-spacing: 0.5px;
  }

  .plabel {
    font-size: 31px;
    font-weight: 600;
    fill: #000;
  }

  .plabel.faint {
    fill: #444;
    font-weight: 400;
  }

  .tile {
    font-size: 30px;
    font-weight: 700;
    fill: #fff;
  }

  .tile.small {
    font-size: 20px;
  }

  .pagefoot {
    position: absolute;
    left: 0;
    right: 0;
    bottom: 0;
    height: 145px;
    box-sizing: border-box;
    border-top: 5px solid #00d084;
    background: rgba(255, 255, 255, 0.93);
    display: flex;
    justify-content: flex-end;
    align-items: flex-start;
    padding: 29px 35px 0 0;
  }

  .configure {
    width: 494px;
    height: 92px;
    font-size: 39px;
  }

  .drawer {
    position: absolute;
    left: 0;
    top: 136px;
    bottom: 0;
    width: 1118px;
    background: #231f1e;
    display: flex;
    color: #d2d2d2;
    font-size: 35px;
    box-shadow: 8px 0 30px rgba(0, 0, 0, 0.55);
  }

  .col-main {
    width: 490px;
    flex: none;
    box-sizing: border-box;
    border-right: 2px solid #111;
  }

  .addnew {
    height: 140px;
    box-sizing: border-box;
    border-bottom: 3px solid #111;
    display: flex;
    align-items: center;
    padding: 6px 0 0 45px;
  }

  .addnew span {
    margin-left: 35px;
  }

  .navrow {
    display: flex;
    align-items: center;
    padding-left: 45px;
  }

  .nav-ico {
    width: 45px;
    height: 45px;
    flex: none;
    color: #d2d2d2;
  }

  .navtxt {
    margin-left: 35px;
    white-space: nowrap;
  }

  .chev {
    width: 14px;
    height: 24px;
    margin: 7px 0 0 24px;
    color: #999;
    flex: none;
  }

  .navrow.current {
    padding-left: 0;
    color: #ff2d5f;
    font-weight: 600;
  }

  .curblock {
    width: 109px;
    height: 100%;
    background: #830020;
    display: flex;
    align-items: center;
    justify-content: center;
    flex: none;
  }

  .curblock .nav-ico {
    color: #fff;
  }

  .navrow.current .navtxt {
    margin-left: 25px;
  }

  .navrow.open {
    color: #ff2d5f;
    font-weight: 600;
    position: relative;
  }

  .navrow.open::before {
    content: '';
    position: absolute;
    left: 0;
    top: 0;
    bottom: 0;
    width: 14px;
    background: #ff2d5f;
  }

  .navrow.open .nav-ico {
    color: #fff;
  }

  .navrow.open .chev {
    width: 18px;
    height: 27px;
    color: #ff2d5f;
  }

  .col-sub {
    flex: 1;
    display: flex;
    flex-direction: column;
  }

  .subhead {
    height: 140px;
    flex: none;
    box-sizing: border-box;
    border-bottom: 3px solid #111;
    display: flex;
    align-items: center;
    justify-content: space-between;
    padding: 0 37px 0 40px;
    color: #fff;
    font-weight: 700;
  }

  .subclose {
    width: 40px;
    height: 40px;
  }

  .sublist {
    list-style: none;
    margin: 0;
    padding: 26px 43px 0 45px;
  }

  .sublist li {
    height: 82px;
    box-sizing: border-box;
    line-height: 80px;
    border-bottom: 2px dashed #0c0c0c;
  }

  .sublist li:last-child {
    border-bottom: 0;
  }

  .sublist.tight {
    padding-top: 25px;
  }

  .settings {
    border-top: 3px solid #111;
    margin-top: 24px;
  }

  .settitle {
    margin: 41px 0 0 45px;
    color: #ff2d5f;
    font-weight: 700;
    line-height: 52px;
  }

  .mark {
    position: absolute;
    box-sizing: border-box;
    border: 9px solid #ed1c24;
  }

  .mark-nav {
    left: 35px;
    top: 469px;
    width: 451px;
    height: 157px;
  }

  .mark-sub {
    left: 465px;
    top: 302px;
    width: 604px;
    height: 129px;
  }

  .taskbar {
    height: 120px;
    flex: none;
    display: flex;
    justify-content: space-between;
    background: linear-gradient(90deg, #d3dde2 0%, #dadfe9 4%, #e4dcd8 6%, #dcd9e6 8%, #d0dde1 13%, #d9d8e6 20%, #e6d9e2 28%, #dbdce0 34%, #ced9e0 38%, #d6dbe6 46%, #e0dbe6 52%, #e4dae4 60%, #e2dde0 66%, #d5dfdd 72%, #d3dfe4 78%, #e0d9e4 84%, #e0dcd8 90%, #dcdfe6 100%);
  }

  .dock {
    display: flex;
  }

  .slot {
    width: 147px;
    height: 120px;
    box-sizing: border-box;
    display: flex;
    justify-content: center;
    padding-top: 25px;
    position: relative;
  }

  .slot svg {
    overflow: visible;
  }

  .slot.on::after {
    content: '';
    position: absolute;
    left: 14px;
    right: 13px;
    bottom: 0;
    height: 6px;
    background: #0078d7;
  }

  .slot.active {
    background: rgba(255, 255, 255, 0.6);
  }

  .slot.active::after {
    left: 0;
    right: 0;
  }

  .tray {
    display: flex;
    align-items: center;
    padding-right: 53px;
  }

  .t-chev {
    width: 36px;
    height: 20px;
  }

  .t-teams {
    width: 50px;
    height: 54px;
    margin-left: 53px;
  }

  .t-drive {
    width: 48px;
    height: 32px;
    margin-left: 47px;
  }

  .t-batt {
    width: 46px;
    height: 26px;
    margin-left: 50px;
  }

  .t-wifi {
    width: 36px;
    height: 36px;
    margin-left: 59px;
  }

  .t-vol {
    width: 50px;
    height: 44px;
    margin-left: 49px;
  }

  .t-pen {
    width: 50px;
    height: 50px;
    margin-left: 60px;
  }

  .clock {
    width: 200px;
    margin-left: 29px;
    display: flex;
    flex-direction: column;
    align-items: center;
    gap: 16px;
    font-size: 33px;
    line-height: 42px;
    color: #000;
    flex: none;
  }

  .notif {
    width: 70px;
    height: 80px;
    margin: 32px 0 0 38px;
    position: relative;
  }

  .ncount {
    position: absolute;
    left: 19px;
    top: 21px;
    width: 48px;
    height: 48px;
    border: 2px solid #666;
    border-radius: 50%;
    background: #ccc;
    font-size: 32px;
    line-height: 48px;
    text-align: center;
    color: #000;
  }
</style>
